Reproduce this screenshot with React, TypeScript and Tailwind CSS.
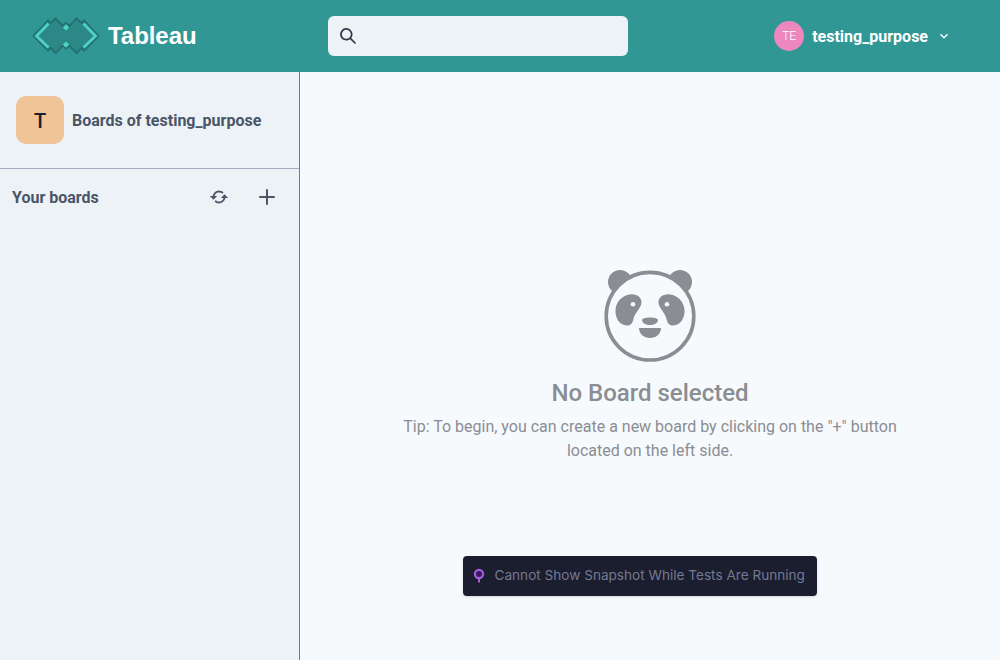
import { BiRefresh } from "react-icons/bi";

function Logo() {
  return (
    <svg width="68" height="38" viewBox="0 0 68 38" className="shrink-0">
      <path
        d="M1.5 19 L16 3.5 L18.5 6 L23.5 1.5 L31 9 L34 6 L37 9 L44.5 1.5 L49.5 6 L52 3.5 L66.500 19 L52 33.500 L49.500 31 L44.500 36 L37 28.500 L34 31.500 L31 28.500 L23.500 36 L18.500 31 L16 33.500 Z"
        fill="#2c8886"
        stroke="#237371"
        strokeWidth="2"
      />
      <path d="M16.500 6.500 L4.500 19 L16.500 30.500" fill="none" stroke="#4fd1c5" strokeWidth="2.800" />
      <path d="M51.500 6.500 L63.500 19 L51.500 30.500" fill="none" stroke="#4fd1c5" strokeWidth="2.800" />
      <path d="M34 7.200 L37.200 10.400 L34 13.600 L30.800 10.400 Z M34 24.400 L37.200 27.600 L34 30.800 L30.800 27.600 Z" fill="#4fd1c5" />
    </svg>
  );
}

function SearchIcon() {
  return (
    <svg width="16" height="16" viewBox="0 0 24 24" fill="currentColor">
      <path d="M23.384,21.619,16.855,15.09a9.284,9.284,0,1,0-1.768,1.768l6.529,6.529a1.266,1.266,0,0,0,1.768,0A1.251,1.251,0,0,0,23.384,21.619ZM2.75,9.5a6.75,6.75,0,1,1,6.75,6.75A6.758,6.758,0,0,1,2.75,9.5Z" />
    </svg>
  );
}

function ChevronDownIcon() {
  return (
    <svg width="16" height="16" viewBox="0 0 24 24" fill="currentColor">
      <path d="M16.59 8.59L12 13.17 7.41 8.59 6 10l6 6 6-6z" />
    </svg>
  );
}

function AddIcon() {
  return (
    <svg width="16" height="16" viewBox="0 0 16 16" fill="none" stroke="currentColor" strokeWidth="2" strokeLinecap="round">
      <path d="M8 1v14M1 8h14" />
    </svg>
  );
}

function Panda() {
  return (
    <svg width="92" height="94" viewBox="0 0 92 94" fill="#8a8d94">
      <circle cx="16" cy="13" r="12" />
      <circle cx="76" cy="13" r="12" />
      <circle cx="46" cy="47.2" r="43.8" fill="#f7fafc" stroke="#8a8d94" strokeWidth="3.6" />
      <path d="M27 25.200 C33 24.700 37.500 28.500 37.500 33 C37.500 39 31 43 29.500 50 C28.500 54 27 56.500 23 56.500 C15 56.500 11 48 11.500 41 C12 32 19 26 27 25.200 Z" />
      <path d="M65 25.200 C59 24.700 54.500 28.500 54.500 33 C54.500 39 61 43 62.500 50 C63.500 54 65 56.500 69 56.500 C77 56.500 81 48 80.500 41 C80 32 73 26 65 25.200 Z" />
      <circle cx="29" cy="35.300" r="2.300" fill="#f7fafc" />
      <circle cx="63" cy="35.300" r="2.300" fill="#f7fafc" />
      <path d="M38 51 C38 47.500 54 47.500 54 51 C54 54 50 56 46 56 C42 56 38 54 38 51 Z" />
      <path d="M35 59 H57 C57 65 52 69 46 69 C40 69 35 65 35 59 Z" />
    </svg>
  );
}

export default function App() {
  return (
    <div className="flex h-[660px] w-[1000px] flex-col overflow-hidden bg-[#f7fafc] font-['Roboto',sans-serif] text-base text-[#4a5568]">
      <header className="flex h-[72px] shrink-0 items-center bg-[#319795] pl-8 pr-12 text-white">
        <div className="flex w-[296px] items-center gap-2">
          <Logo />
          <span className="font-['Liberation_Sans',sans-serif] text-2xl font-bold tracking-[-0.05px]">Tableau</span>
        </div>
        <div className="flex h-10 w-[300px] items-center rounded-md bg-[#edf2f7] pl-3 text-[#2d3748]">
          <SearchIcon />
        </div>
        <div className="ml-auto flex items-center gap-2">
          <div className="flex h-[30px] w-[30px] items-center justify-center rounded-full bg-[#ed87be] text-xs font-light">TE</div>
          <span className="pt-0.5 font-bold">testing_purpose</span>
          <ChevronDownIcon />
        </div>
      </header>
      <div className="flex min-h-0 flex-1">
        <aside className="w-[300px] shrink-0 border-r border-[#319795] bg-[#edf2f7]">
          <div className="flex h-[97px] items-center gap-2 border-b border-[#a0aec0] px-4">
            <div className="flex h-12 w-12 items-center justify-center rounded-[10px] bg-[#f0c497] pt-0.5 text-xl font-medium text-[#1a202c]">T</div>
            <span className="pt-0.5 font-bold">Boards of testing_purpose</span>
          </div>
          <div className="flex h-14 items-center pl-3 pr-6">
            <span className="flex-1 pt-0.5 font-bold">Your boards</span>
            <BiRefresh size={22} className="mr-[29px]" />
            <AddIcon />
          </div>
        </aside>
        <main className="flex flex-1 flex-col items-center pt-[197px] text-center text-[#8a8d94]">
          <Panda />
          <h1 className="mt-4 text-2xl font-medium leading-[29px]">No Board selected</h1>
          <p className="mt-[7px] w-[500px] leading-6">
            Tip: To begin, you can create a new board by clicking on the "+" button located on the left side.
          </p>
          <div className="mr-5 mt-[93px] flex h-10 w-[354px] items-center rounded bg-[#1b1e2e] pl-[10px] text-left text-[#747994] shadow">
            <svg width="12" height="16" viewBox="0 0 12 16" className="mr-[9.5px]">
              <circle cx="6" cy="6" r="4.1" fill="#38185e" stroke="#a35edb" strokeWidth="2.2" />
              <path d="M6 10v4.5" stroke="#a35edb" strokeWidth="2" />
            </svg>
            <span className="whitespace-nowrap pb-0.5 font-['Inter',sans-serif] text-[13.6px]">Cannot Show Snapshot While Tests Are Running</span>
          </div>
        </main>
      </div>
    </div>
  );
}
